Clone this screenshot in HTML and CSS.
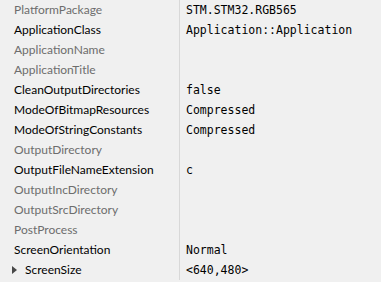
FILE: index.html
```html
<!DOCTYPE html>
<html lang="en">
<head>
    <meta charset="UTF-8">
    <title>Properties</title>
    <link rel="stylesheet" href="styles.css">
</head>
<body>
    <div class="grid">
        <div class="row"><div class="key dim">PlatformPackage</div><div class="val">STM.STM32.RGB565</div></div>
        <div class="row"><div class="key">ApplicationClass</div><div class="val">Application::Application</div></div>
        <div class="row"><div class="key dim">ApplicationName</div><div class="val"></div></div>
        <div class="row"><div class="key dim">ApplicationTitle</div><div class="val"></div></div>
        <div class="row"><div class="key">CleanOutputDirectories</div><div class="val">false</div></div>
        <div class="row"><div class="key">ModeOfBitmapResources</div><div class="val">Compressed</div></div>
        <div class="row"><div class="key">ModeOfStringConstants</div><div class="val">Compressed</div></div>
        <div class="row"><div class="key dim">OutputDirectory</div><div class="val"></div></div>
        <div class="row"><div class="key">OutputFileNameExtension</div><div class="val">c</div></div>
        <div class="row"><div class="key dim">OutputIncDirectory</div><div class="val"></div></div>
        <div class="row"><div class="key dim">OutputSrcDirectory</div><div class="val"></div></div>
        <div class="row"><div class="key dim">PostProcess</div><div class="val"></div></div>
        <div class="row"><div class="key">ScreenOrientation</div><div class="val">Normal</div></div>
        <div class="row"><div class="key group"><span class="arrow"></span>ScreenSize</div><div class="val">&lt;640,480&gt;</div></div>
    </div>
</body>
</html>
```

FILE: styles.css
```css
body {
    margin: 0;
    background: #f0f0f0;
    font-family: 'Segoe UI', Lato, sans-serif;
    font-size: 12px;
    overflow: hidden;
}
.grid {
    display: flex;
    flex-direction: column;
}
.row {
    display: flex;
    height: 20px;
    align-items: center;
}
.key {
    width: 165px;
    padding-left: 14px;
    color: #000;
    white-space: nowrap;
    border-right: 1px solid #d8d8d8;
    height: 20px;
    line-height: 20px;
}
.key.dim {
    color: #6d6d6d;
}
.key.group {
    display: flex;
    align-items: center;
    padding-left: 12px;
    width: 167px;
}
.arrow {
    width: 0;
    height: 0;
    border-top: 4px solid transparent;
    border-bottom: 4px solid transparent;
    border-left: 5px solid #484848;
    margin-right: 8px;
}
.val {
    padding-left: 6px;
    font-family: 'DejaVu Sans Mono', monospace;
    font-size: 11.5px;
    color: #000;
    white-space: nowrap;
}
```
